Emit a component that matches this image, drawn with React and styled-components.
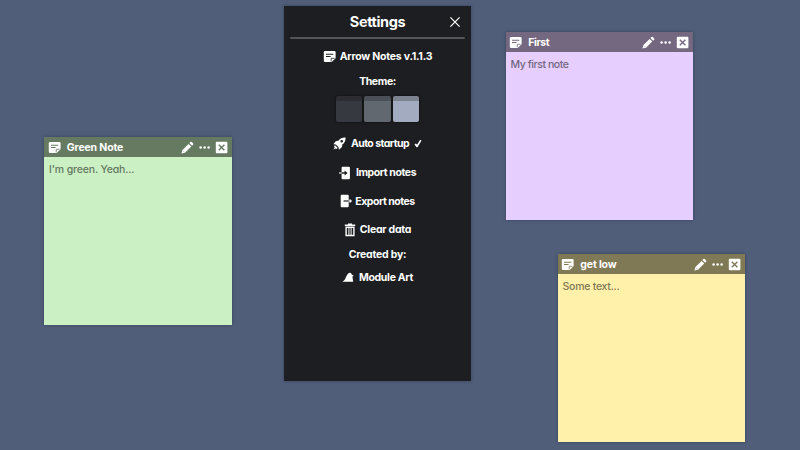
import React from 'react';
import styled, { createGlobalStyle } from 'styled-components';

const GlobalStyle = createGlobalStyle`
  * { box-sizing: border-box; }
  body { margin: 0; overflow: hidden; }
`;

const Desktop = styled.main`
  position: relative;
  width: 800px;
  height: 450px;
  background: #505e7a;
  font-family: "Century Gothic", Inter, sans-serif;
  font-feature-settings: "cv11";
  font-size: 10.5px;
  line-height: 14px;
  color: #fff;
`;

const Window = styled.section`
  position: absolute;
  left: ${(p) => p.$x}px;
  top: ${(p) => p.$y}px;
  display: flex;
  flex-direction: column;
  box-shadow: 0 0 3px rgba(20, 28, 45, 0.4);
`;

const NoteWindow = styled(Window)`
  width: ${(p) => p.$w}px;
  height: 188px;
  background: ${(p) => p.$body};
`;

const NoteBar = styled.header`
  height: 20px;
  flex: none;
  display: flex;
  align-items: center;
  padding: 1px 4.2px 0 3.8px;
  background: ${(p) => p.$color};
`;

const NoteTitle = styled.h2`
  flex: 1;
  margin: 0 0 0 6px;
  font-size: inherit;
  font-weight: 700;
  white-space: nowrap;
  letter-spacing: ${(p) => p.$track}px;
`;

const Actions = styled.div`
  display: flex;
  align-items: center;
  gap: 4px;
`;

const NoteText = styled.p`
  margin: 0;
  padding: 6px 5px 5px;
  font-weight: 500;
  white-space: nowrap;
  color: ${(p) => p.$color};
  letter-spacing: ${(p) => p.$track}px;
`;

const SettingsWindow = styled(Window)`
  width: 187px;
  height: 375px;
  padding: 0 6px;
  background: #1d1e21;
`;

const SettingsHead = styled.header`
  height: 31px;
  flex: none;
  display: grid;
  grid-template-columns: 16px 1fr 16px;
  align-items: center;
  padding-top: 1px;
`;

const Divider = styled.div`
  height: 2px;
  flex: none;
  border-radius: 1px;
  background: #545558;
`;

const SettingsTitle = styled.h1`
  margin: 0;
  font-size: 14.5px;
  line-height: 20px;
  font-weight: 700;
  text-align: center;
  letter-spacing: ${(p) => p.$track}px;
`;

const Row = styled.div`
  height: ${(p) => p.$h}px;
  flex: none;
  display: flex;
  align-items: center;
  justify-content: center;
  gap: ${(p) => p.$gap ?? 4}px;
`;

const Label = styled.span`
  font-weight: 700;
  white-space: nowrap;
  letter-spacing: ${(p) => p.$track ?? 0}px;
  padding: ${(p) => p.$drop ?? 0}px 0 0 ${(p) => p.$indent ?? 0}px;
`;

const Swatch = styled.div`
  width: 26.5px;
  height: 26.5px;
  border-radius: 2px;
  border-top: 5px solid ${(p) => p.$top};
  background: ${(p) => p.$fill};
  box-shadow: 0 0 3px rgba(0, 0, 0, 0.6);
`;

const Glyph = styled.svg`
  display: block;
  flex: none;
  fill: currentColor;
`;

const NoteIcon = ({ hole }) => (
  <Glyph width="13" height="13" viewBox="0 0 13 13">
    <path d="M2 1h9.4a1.2 1.2 0 0 1 1.2 1.2v6L8.6 12H2A1.2 1.2 0 0 1 .8 10.8V2.2A1.2 1.2 0 0 1 2 1Z" />
    <path d="M3 4.2h7.3M3 6.5h4.6" stroke={hole} strokeWidth="1.1" />
    <path d="M8.2 11.4V8.3h3.4" fill="none" stroke={hole} strokeWidth=".8" />
  </Glyph>
);

const PencilIcon = () => (
  <Glyph width="13" height="13" viewBox="0 0 13 13">
    <path d="M.5 12.5 1.2 9.2 7.6 2.9l2.7 2.7L4 11.8ZM8.4 2.1l1-1a1 1 0 0 1 1.4 0l1.3 1.3a1 1 0 0 1 0 1.4l-1 1Z" />
    <path d="m1.9 9.7 1.5 1.5" stroke="rgba(0,0,0,.3)" strokeWidth=".7" />
  </Glyph>
);

const DotsIcon = () => (
  <Glyph width="13" height="13" viewBox="0 0 13 13">
    <circle cx="2.6" cy="6.5" r="1.25" />
    <circle cx="6.6" cy="6.5" r="1.25" />
    <circle cx="10.6" cy="6.5" r="1.25" />
  </Glyph>
);

const BoxCloseIcon = ({ hole }) => (
  <Glyph width="13" height="13" viewBox="0 0 13 13">
    <rect x=".8" y=".8" width="11.6" height="11.4" rx="1" />
    <path d="m3.8 3.7 5.6 5.6M9.4 3.7 3.8 9.3" fill="none" stroke={hole} strokeWidth="1.4" />
  </Glyph>
);

const CloseIcon = () => (
  <Glyph width="12" height="12" viewBox="0 0 12 12">
    <path d="m1.4 1.4 9.2 9.2m0-9.2-9.2 9.2" stroke="currentColor" strokeWidth="1.2" />
  </Glyph>
);

const RocketIcon = () => (
  <Glyph width="13" height="13" viewBox="0 0 13 13">
    <path
      fillRule="evenodd"
      d="M12.6.4C9.4.2 7.2 1.3 5.4 3.7L3 4 .3 7.2l2.5.2L5.6 10.2l.3 2.5L9 10l.3-2.4c2.4-1.8 3.4-4.1 3.3-7.2ZM8.7 2.9a1.3 1.3 0 1 1 0 2.6 1.3 1.3 0 0 1 0-2.6Z"
    />
    <path d="M2.1 8.3 4.7 10.9 3.4 12l-.7-.6-2.2 1.2 1.2-2.3-.7-.7Z" />
  </Glyph>
);

const CheckIcon = () => (
  <Glyph width="8" height="9" viewBox="0 0 8 9">
    <path d="m.5 5.4 1.4-1 1.2 1.4L6.2.8l1.3.7-4 6.8h-.9Z" />
  </Glyph>
);

const ImportIcon = () => (
  <Glyph width="12" height="14" viewBox="0 0 12 14">
    <path d="M3.6.7h6.3a1 1 0 0 1 1 1v10.6a1 1 0 0 1-1 1H3.6a1 1 0 0 1-1-1V1.7a1 1 0 0 1 1-1Z" />
    <path d="M2.4 6.3h3.2V4.4L8.6 7 5.6 9.6V7.7H2.4Z" fill="#1d1e21" />
    <path d="M0 7h2.6" stroke="currentColor" strokeWidth="1.1" />
  </Glyph>
);

const ExportIcon = () => (
  <Glyph width="12" height="14" viewBox="0 0 12 14">
    <path d="M1.7.7h6a1 1 0 0 1 1 1v10.6a1 1 0 0 1-1 1h-6a1 1 0 0 1-1-1V1.7a1 1 0 0 1 1-1Z" />
    <path d="M3.6 7h5.1" stroke="#1d1e21" strokeWidth="1.2" />
    <path d="M8.7 7H11" stroke="currentColor" strokeWidth="1.1" />
    <path d="M9.7 4.8 12 7 9.7 9.2Z" />
  </Glyph>
);

const TrashIcon = () => (
  <Glyph width="12" height="14" viewBox="0 0 12 14">
    <path d="M4 .5h4v1h3.2V3H.8V1.5H4Z" />
    <path d="M2.1 4.3h7.8v8.2H2.1Z" fill="none" stroke="currentColor" strokeWidth="1.4" />
    <path d="M4.9 5v7M7.1 5v7" stroke="currentColor" strokeWidth="1" />
  </Glyph>
);

const ModuleIcon = () => (
  <Glyph width="12" height="11" viewBox="0 0 12 11">
    <path d="M.2 9.8C2.2 9 2.9 7.6 4 5.1 5.3 2.1 6.6.7 8 .7c.9 0 1.4.7 1.7 1.8l2.1 1.3-1.4.8.8 5.2Z" />
  </Glyph>
);

const notes = [
  { title: 'Green Note', text: "I'm green. Yeah...", x: 44, y: 137, w: 188, bar: '#667a62', body: '#caf0c4', ink: '#657862', t: -0.15, b: -0.15 },
  { title: 'First', text: 'My first note', x: 505.5, y: 32, w: 187.5, bar: '#746880', body: '#e6cfff', ink: '#736780', t: -0.45, b: -0.42 },
  { title: 'get low', text: 'Some text...', x: 557.5, y: 254, w: 187.5, bar: '#807955', body: '#fff1aa', ink: '#807955', t: -0.15, b: -0.25 },
];

const Note = ({ note }) => (
  <NoteWindow $x={note.x} $y={note.y} $w={note.w} $body={note.body}>
    <NoteBar $color={note.bar}>
      <NoteIcon hole={note.bar} />
      <NoteTitle $track={note.t}>{note.title}</NoteTitle>
      <Actions>
        <PencilIcon />
        <DotsIcon />
        <BoxCloseIcon hole={note.bar} />
      </Actions>
    </NoteBar>
    <NoteText $color={note.ink} $track={note.b}>{note.text}</NoteText>
  </NoteWindow>
);

const Settings = () => (
  <SettingsWindow $x={284} $y={6}>
    <SettingsHead>
      <span />
      <SettingsTitle $track={-0.4}>Settings</SettingsTitle>
      <CloseIcon />
    </SettingsHead>
    <Divider />
    <Row $h={34}><NoteIcon hole="#1d1e21" /><Label $track={-0.23} $drop={1}>Arrow Notes v.1.1.3</Label></Row>
    <Row $h={16}><Label $track={-0.4} $drop={1}>Theme:</Label></Row>
    <Row $h={40} $gap={2.2}>
      <Swatch $top="#2c2d33" $fill="#373941" />
      <Swatch $top="#4b4f58" $fill="#626870" />
      <Swatch $top="#7d8290" $fill="#a3abc0" />
    </Row>
    <Row $h={29} $gap={4.6}><RocketIcon /><Label $track={-0.55}>Auto startup</Label><CheckIcon /></Row>
    <Row $h={29}><ImportIcon /><Label $track={-0.42} $indent={1}>Import notes</Label></Row>
    <Row $h={28} $gap={2}><ExportIcon /><Label $track={-0.48} $drop={1} $indent={1}>Export notes</Label></Row>
    <Row $h={29}><TrashIcon /><Label $track={-0.25}>Clear data</Label></Row>
    <Row $h={21}><Label $track={-0.22}>Created by:</Label></Row>
    <Row $h={24}><ModuleIcon /><Label $track={-0.3} $drop={1} $indent={1}>Module Art</Label></Row>
  </SettingsWindow>
);

export default function App() {
  return (
    <>
      <GlobalStyle />
      <Desktop>
        <Settings />
        {notes.map((note) => <Note key={note.title} note={note} />)}
      </Desktop>
    </>
  );
}
